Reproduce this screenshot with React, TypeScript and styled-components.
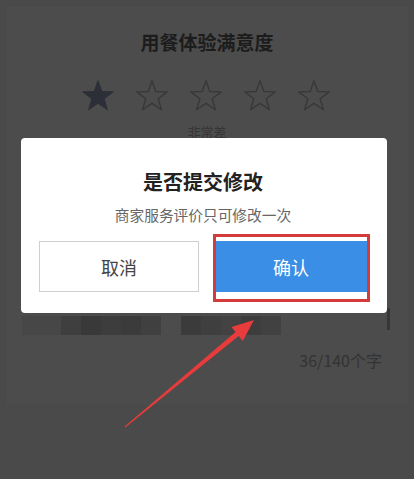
import React from "react";
import styled, { createGlobalStyle } from "styled-components";

const Global = createGlobalStyle`
  html, body { margin: 0; padding: 0; }
  body {
    background: #4a4a4a;
    font-family: "Noto Sans CJK SC", "Noto Sans", sans-serif;
  }
`;

const Page = styled.div`
  position: relative;
  width: 414px;
  height: 479px;
  overflow: hidden;
  background: #4a4a4a;
  padding: 5px;
  box-sizing: border-box;
`;

const Card = styled.div`
  height: 401px;
  background: #4c4c4c;
  border: 1px solid #494949;
  box-sizing: border-box;
  display: flex;
  flex-direction: column;
  align-items: center;
  padding-top: 23px;
`;

const Heading = styled.div`
  font-size: 19px;
  line-height: 26px;
  font-weight: 700;
  color: #1c1c1c;
`;

const Stars = styled.div`
  margin-top: 25px;
  margin-right: 3px;
  display: flex;
  gap: 22px;
  height: 32px;
`;

const Label = styled.div`
  margin-top: 11px;
  font-size: 13px;
  line-height: 18px;
  color: #353535;
`;

const MosaicRow = styled.div`
  align-self: stretch;
  margin-top: 175px;
  padding-left: 16px;
  padding-right: 18px;
  display: flex;
  align-items: flex-start;
  height: 19px;
`;

const Block = styled.div<{ $w: number; $c: string }>`
  width: ${(p) => p.$w}px;
  height: 19px;
  background: ${(p) => p.$c};
`;

const Cursor = styled.div`
  margin-left: auto;
  width: 3px;
  height: 22px;
  margin-top: -8px;
  background: #363636;
`;

const Counter = styled.div`
  align-self: flex-end;
  margin-top: 15px;
  padding-right: 26px;
  font-size: 16px;
  line-height: 20px;
  color: #333;
`;

const Dialog = styled.div`
  position: absolute;
  left: 21px;
  top: 138px;
  width: 366px;
  height: 175px;
  background: #ffffff;
  border-radius: 4px;
  box-sizing: border-box;
  padding: 30px 20px 21px 18px;
  display: flex;
  flex-direction: column;
  align-items: center;
`;

const DialogTitle = styled.div`
  font-size: 20px;
  line-height: 28px;
  font-weight: 700;
  color: #222;
`;

const DialogText = styled.div`
  margin-top: 9px;
  font-size: 14.7px;
  line-height: 20px;
  color: #666;
`;

const Buttons = styled.div`
  margin-top: 16px;
  align-self: stretch;
  display: grid;
  grid-template-columns: 160px 152px;
  justify-content: space-between;
`;

const Button = styled.div<{ $primary?: boolean }>`
  height: 51px;
  box-sizing: border-box;
  display: flex;
  align-items: center;
  justify-content: center;
  font-size: 18px;
  background: ${(p) => (p.$primary ? "#3a8ee5" : "#fff")};
  color: ${(p) => (p.$primary ? "#fff" : "#444")};
  border: 1px solid ${(p) => (p.$primary ? "#3a8ee5" : "#cfcfcf")};
`;

const Frame = styled.div`
  position: absolute;
  left: 213px;
  top: 234px;
  width: 157px;
  height: 68px;
  border: 3px solid #d43c3c;
  box-sizing: border-box;
`;

const Overlay = styled.svg`
  position: absolute;
  left: 0;
  top: 0;
  pointer-events: none;
`;

const starPoints =
  "16,0.8 19.82,11.54 31.22,11.86 22.18,18.81 25.4,29.74 16,23.3 6.6,29.74 9.82,18.81 0.78,11.86 12.18,11.54";

const Star = ({ filled }: { filled: boolean }) => (
  <svg width="32" height="32" viewBox="0 0 32 32">
    <polygon
      points={starPoints}
      fill={filled ? "#2c2f37" : "none"}
      stroke={filled ? "#2c2f37" : "#383838"}
      strokeWidth={filled ? 1 : 1.4}
      strokeLinejoin="round"
    />
  </svg>
);

const blocks: [number, string][] = [
  [39, "#474747"],
  [20, "#3f3f3f"],
  [20, "#393939"],
  [20, "#3d3d3d"],
  [20, "#3b3b3b"],
  [20, "#404040"],
  [20, "#4c4c4c"],
  [20, "#3b3b3b"],
  [20, "#3f3f3f"],
  [20, "#424242"],
  [20, "#3d3d3d"],
  [20, "#414141"],
];

export default function App() {
  return (
    <>
      <Global />
      <Page>
        <Card>
          <Heading>用餐体验满意度</Heading>
          <Stars>
            {[0, 1, 2, 3, 4].map((i) => (
              <Star key={i} filled={i === 0} />
            ))}
          </Stars>
          <Label>非常差</Label>
          <MosaicRow>
            {blocks.map(([w, c], i) => (
              <Block key={i} $w={w} $c={c} />
            ))}
            <Cursor />
          </MosaicRow>
          <Counter>36/140个字</Counter>
        </Card>
        <Dialog>
          <DialogTitle>是否提交修改</DialogTitle>
          <DialogText>商家服务评价只可修改一次</DialogText>
          <Buttons>
            <Button>取消</Button>
            <Button $primary>确认</Button>
          </Buttons>
        </Dialog>
        <Frame />
        <Overlay width="414" height="479" viewBox="0 0 414 479">
          <polygon
            points="125.3,427.4 238.7,335.9 242.8,340.9 254,320 231.4,327.1 235.5,332.1 124.7,426.6"
            fill="#e83b3b"
          />
        </Overlay>
      </Page>
    </>
  );
}
